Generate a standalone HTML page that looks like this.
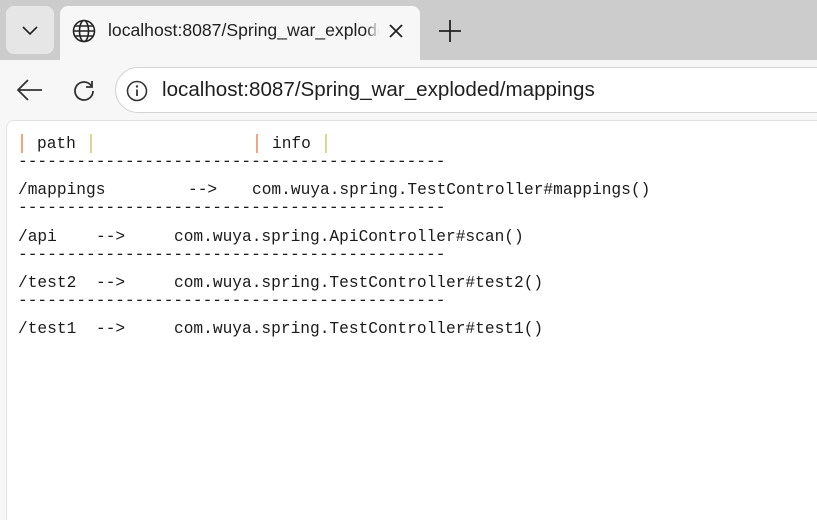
<!DOCTYPE html>
<html><head><meta charset="utf-8"><style>
*{margin:0;padding:0;box-sizing:border-box}
body{width:817px;height:507px;overflow:hidden;background:#f7f7f7;font-family:"Liberation Sans",sans-serif;position:relative}
.tabbar{position:absolute;left:0;top:0;width:817px;height:60px;background:#cccccc}
.dd{position:absolute;left:6px;top:6px;width:48px;height:48px;background:#e6e6e6;border-radius:8px}
.tab{position:absolute;left:60px;top:6px;width:360px;height:54px;background:#f7f7f7;border-radius:8px 8px 0 0}
.tabt{position:absolute;left:108px;top:20px;font-size:17.6px;color:#1f1f1f;white-space:nowrap;width:280px;overflow:hidden}
.addr{position:absolute;left:115px;top:67px;width:760px;height:46px;background:#fff;border:1px solid #d4d4d4;border-radius:23px}
.url{position:absolute;left:162px;top:78px;font-size:20.6px;color:#1f1f1f}
.page{position:absolute;left:6px;top:120px;width:820px;height:400px;background:#fff;border-radius:8px 0 0 0;border-top:1px solid #e2e2e2;border-left:1px solid #e2e2e2}
.m{position:absolute;font-family:"Liberation Mono",monospace;font-size:16.2px;color:#1a1a1a;white-space:pre;line-height:20px}
.bar{position:absolute;width:2px;height:19px}
</style></head><body>
<div class="tabbar"></div>
<div class="dd"></div>
<svg style="position:absolute;left:20px;top:22px" width="20" height="16"><path d="M3 5 L10 12 L17 5" fill="none" stroke="#222" stroke-width="1.6"/></svg>
<div class="tab"></div>
<svg style="position:absolute;left:71px;top:18px" width="26" height="26" viewBox="0 0 26 26" fill="none" stroke="#222" stroke-width="1.6"><circle cx="13" cy="13" r="10.5"/><ellipse cx="13" cy="13" rx="4.5" ry="10.5"/><path d="M2.5 13h21M4 8h18M4 18h18"/></svg>
<div class="tabt">localhost:8087/Spring_war_explode</div>
<div style="position:absolute;left:366px;top:18px;width:22px;height:26px;background:linear-gradient(to right,rgba(247,247,247,0),#f7f7f7 60%)"></div>
<svg style="position:absolute;left:388px;top:23px" width="16" height="16"><path d="M2 2L14 14M14 2L2 14" stroke="#222" stroke-width="1.8"/></svg>
<svg style="position:absolute;left:438px;top:19px" width="24" height="24"><path d="M12 1V23M1 12H23" stroke="#222" stroke-width="1.8"/></svg>
<svg style="position:absolute;left:16px;top:78px" width="28" height="24"><path d="M26 12H2M12 2L2 12L12 22" fill="none" stroke="#333" stroke-width="1.8"/></svg>
<svg style="position:absolute;left:72px;top:78px" width="24" height="24"><path d="M19.5 8A9 9 0 1 0 21 13" fill="none" stroke="#333" stroke-width="1.8"/><path d="M20 3V9H14" fill="none" stroke="#333" stroke-width="1.8"/></svg>
<div class="addr"></div>
<svg style="position:absolute;left:126px;top:80px" width="22" height="22"><circle cx="11" cy="11" r="9.5" fill="none" stroke="#333" stroke-width="1.6"/><path d="M11 9.5V16" stroke="#333" stroke-width="1.8"/><circle cx="11" cy="6.5" r="1.2" fill="#333"/></svg>
<div class="url">localhost:8087/Spring_war_exploded/mappings</div>
<div class="page"></div>
<div class="bar" style="left:21px;top:134px;background:#f4a582"></div>
<div class="m" style="left:37px;top:134px">path</div>
<div class="bar" style="left:90px;top:134px;background:#d8d890"></div>
<div class="bar" style="left:256px;top:134px;background:#f4a582"></div>
<div class="m" style="left:272px;top:134px">info</div>
<div class="bar" style="left:325px;top:134px;background:#d8d890"></div>
<div class="m" style="left:18px;top:152px">--------------------------------------------</div>
<div class="m" style="left:18px;top:180px">/mappings</div><div class="m" style="left:188px;top:180px">--&gt;</div><div class="m" style="left:252px;top:180px">com.wuya.spring.TestController#mappings()</div>
<div class="m" style="left:18px;top:198px">--------------------------------------------</div>
<div class="m" style="left:18px;top:227px">/api</div><div class="m" style="left:96px;top:227px">--&gt;</div><div class="m" style="left:174px;top:227px">com.wuya.spring.ApiController#scan()</div>
<div class="m" style="left:18px;top:245px">--------------------------------------------</div>
<div class="m" style="left:18px;top:273px">/test2</div><div class="m" style="left:96px;top:273px">--&gt;</div><div class="m" style="left:174px;top:273px">com.wuya.spring.TestController#test2()</div>
<div class="m" style="left:18px;top:291px">--------------------------------------------</div>
<div class="m" style="left:18px;top:319px">/test1</div><div class="m" style="left:96px;top:319px">--&gt;</div><div class="m" style="left:174px;top:319px">com.wuya.spring.TestController#test1()</div>
</body></html>
